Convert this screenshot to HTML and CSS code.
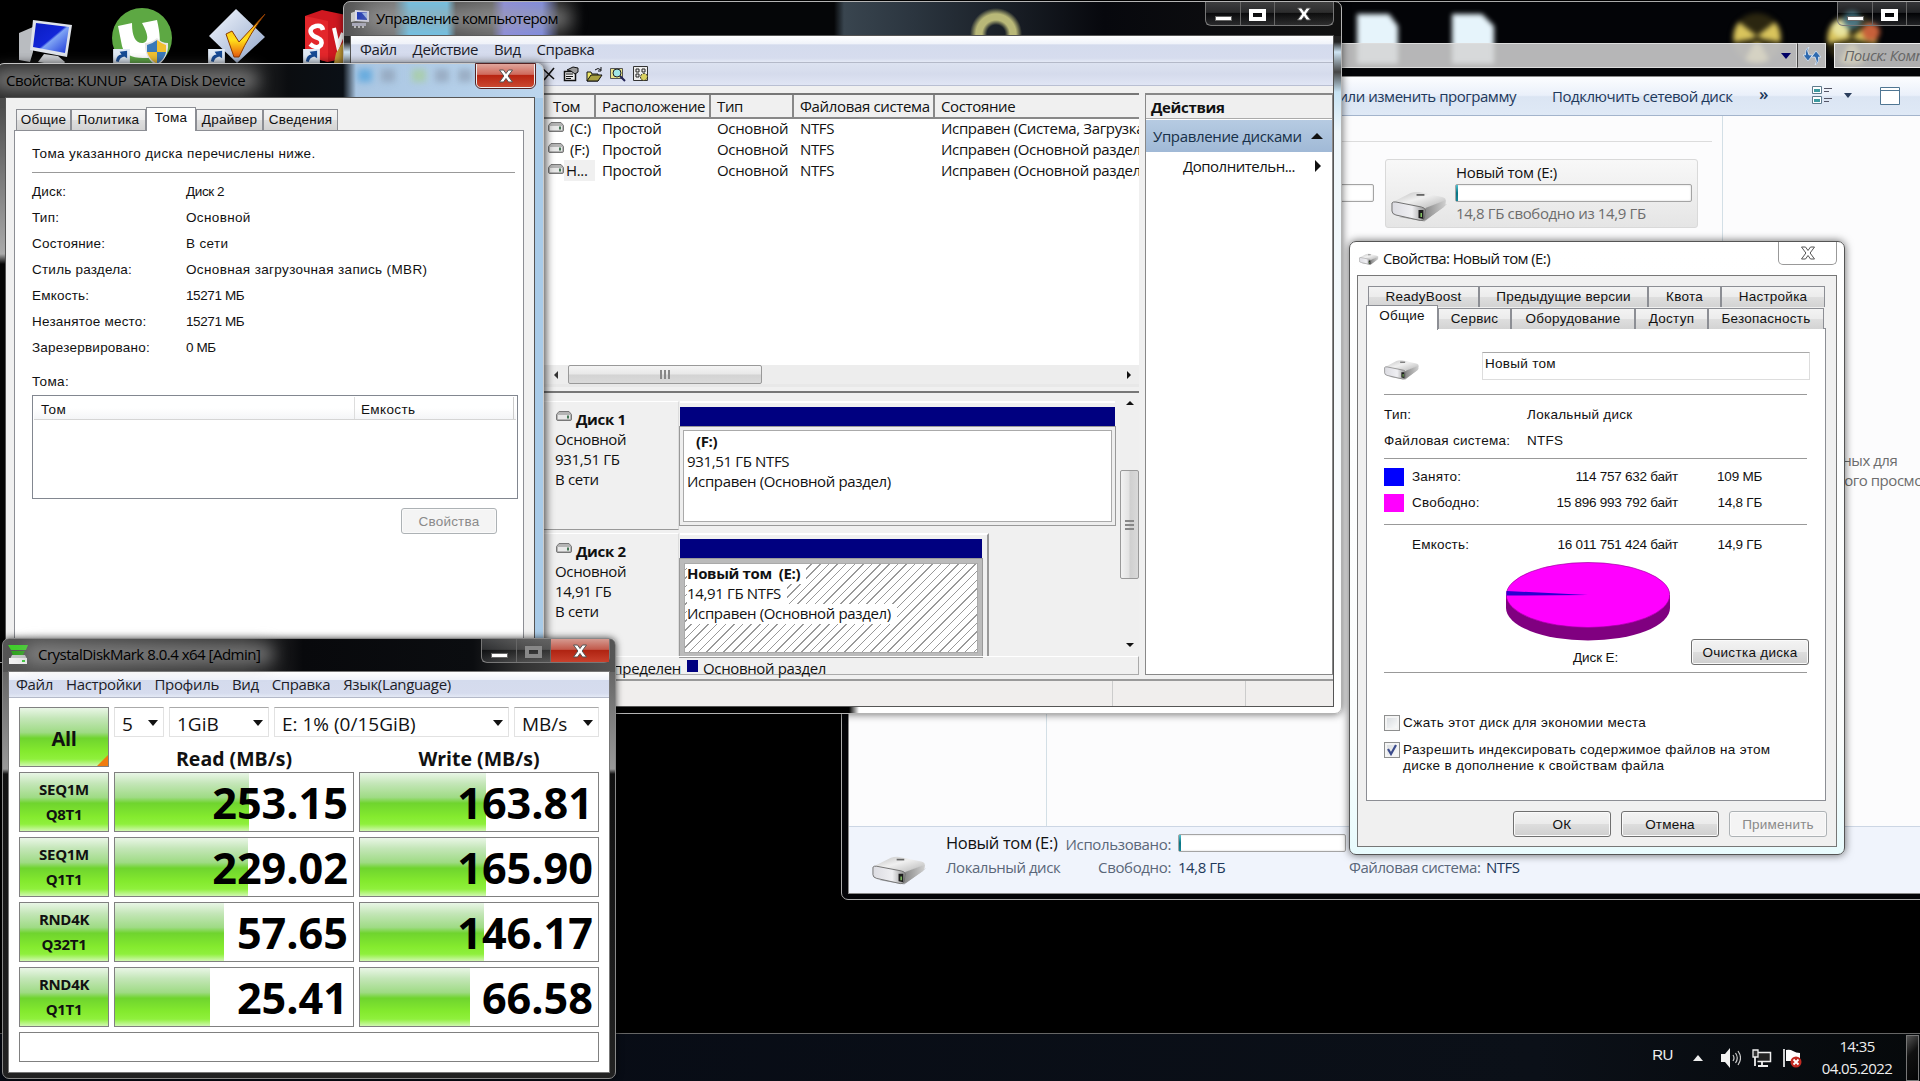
FILE: index.html
```html
<!DOCTYPE html>
<html lang="ru">
<head>
  <meta charset="UTF-8">
  <title>Рабочий стол</title>
  <link rel="stylesheet" href="styles.css">
</head>
<body>
  <svg class="defs" width="0" height="0">
    <defs>
      <linearGradient id="gTop" x1="0" y1="0" x2="1" y2="1"><stop offset="0" stop-color="#bdbdbd"/><stop offset=".45" stop-color="#f0f0f0"/><stop offset="1" stop-color="#b5b5b5"/></linearGradient>
      <linearGradient id="gSide" x1="0" y1="0" x2="1" y2="0"><stop offset="0" stop-color="#dcdce2"/><stop offset=".6" stop-color="#efeff2"/><stop offset="1" stop-color="#8f8f8f"/></linearGradient>
      <linearGradient id="gEdge" x1="0" y1="0" x2="1" y2="0"><stop offset="0" stop-color="#7e7e7e"/><stop offset="1" stop-color="#d0d0d0"/></linearGradient>
      <linearGradient id="gScreen" x1="0" y1="0" x2="1" y2="1"><stop offset="0" stop-color="#0a1cc0"/><stop offset=".5" stop-color="#1226d8"/><stop offset=".55" stop-color="#7fa4f4"/><stop offset="1" stop-color="#1a35d8"/></linearGradient>
      <linearGradient id="gDiamond" x1="0" y1="0" x2="1" y2="1"><stop offset="0" stop-color="#f4f8ff"/><stop offset="1" stop-color="#8fa4c8"/></linearGradient>
      <linearGradient id="gCheck" x1="0" y1="0" x2="0" y2="1"><stop offset="0" stop-color="#ff9a1a"/><stop offset=".6" stop-color="#ffe11a"/><stop offset="1" stop-color="#e8590c"/></linearGradient>
    </defs>
    <symbol id="drive" viewBox="0 0 58 32" preserveAspectRatio="none">
      <path d="M8 27 L34 31.500 L57 14 L50 17z" fill="#000" opacity=".25"/>
      <path d="M2 12 L20 3 Q24 1.500 29 2 L52 7 Q57 8.500 55 11 L36 18 L4 14z" fill="url(#gTop)"/>
      <path d="M56 10 L35 18 L31 30.500 Q34 31 36 29.500 L54 17 Q56 14 56 10z" fill="url(#gEdge)"/>
      <path d="M1 13 Q2 11.500 5 12 L31 17 Q35 18 35 20 L34 28 Q33 31 30 30.500 L5 25 Q1 24 1 21z" fill="url(#gSide)" stroke="#707070" stroke-width="1"/>
      <path d="M28 20h5v9l-5-1z" fill="#1c1c1c"/><path d="M30 23h1.500v4h-1.500z" fill="#8c6"/>
      <path d="M26 4h8v1.800h-8z" fill="#666"/>
    </symbol>
    <symbol id="hdd" viewBox="0 0 16 10">
      <path d="M3 .5h10l2.500 3v4.500q0 1.500-1.500 1.500h-12q-1.500 0-1.500-1.500v-4.500z" fill="#b4b4b4" stroke="#777"/>
      <path d="M2 4h12v4h-12z" fill="#e8e8e8"/><path d="M11 4.500h2v3h-2z" fill="#475"/>
    </symbol>
    <symbol id="shortcut" viewBox="0 0 18 15">
      <path d="M0 0h18v15h-18z" fill="#dfe9f4"/>
      <path d="M3 13 Q4 6 9 6 L7 3 L15 2 L15 10 L12 8 Q7 9 6 14z" fill="#164a94"/>
    </symbol>
    <symbol id="cross" viewBox="0 0 16 14">
      <path d="M1.500 1h4l2.500 3.500 2.500-3.500h4l-4.400 6 4.400 6h-4l-2.500-3.500-2.500 3.500h-4l4.400-6z" fill="#fff" stroke="#555" stroke-width="1"/>
    </symbol>
    <symbol id="nuke" viewBox="0 0 52 52">
      <circle cx="26" cy="26" r="25" fill="#2b2610"/>
      <path d="M26 24 L8 10 A25 25 0 0 0 3 30 L20 27z M26 24 L44 10 A25 25 0 0 1 49 30 L32 27z M23 31 L14 48 A25 25 0 0 0 38 48 L29 31z" fill="#d9c45c"/>
    </symbol>
  </svg>

  <div class="desktop">
    <svg class="shortcuts" width="350" height="70" viewBox="0 0 350 70">
      <path d="M19 33 L33 27 L33 52 L30 62 L19 60z" fill="#b9bcc0"/>
      <path d="M33 20 L72 25 L67 57 L30 50z" fill="#dfe3ea"/>
      <path d="M36 23 L69 27 L65 53 L33 47z" fill="url(#gScreen)"/>
      <path d="M44 54 L58 56 L65 62 L62 66 L38 62z" fill="#cfd2d6"/>
      <circle cx="142" cy="38" r="30" fill="#5da843"/>
      <path d="M118 26 L132 23 Q132 44 143 43 Q152 41 142 23 L157 20 Q162 42 158 48 L165 58 L143 58 Q125 58 122 46z" fill="#fff"/>
      <path d="M157 38 Q151 43 145 43 Q144 58 157 66 Q169 58 168 43 Q161 43 157 38z" fill="#e6e6e6"/>
      <path d="M157 40 Q152 44 147 45 V52 H157z M157 52 H166 Q165 59 157 64z" fill="#3a78b8"/>
      <path d="M157 40 Q162 44 166 45 V52 H157z M157 52 H147 Q149 59 157 64z" fill="#f0c030"/>
      <path d="M236 9 L265 37 L237 63 L209 36z" fill="url(#gDiamond)"/>
      <path d="M226 34 L232 31 L239 42 L265 14 Q250 33 239 57 L234 57z" fill="url(#gCheck)" stroke="#8a3a00"/>
      <path d="M305 16 L322 10 L346 15 L346 58 L328 62 L305 56z" fill="#cf1820"/>
      <path d="M305 16 L328 21 L328 62 L305 56z" fill="#e3262b"/>
      <path d="M323 30 Q322 25 316 26 Q309 28 311 33 Q313 37 318 38 Q323 40 321 45 Q317 50 310 44" fill="none" stroke="#fff" stroke-width="4.500"/>
      <path d="M334 28 L338 46 L343 33" fill="none" stroke="#fff" stroke-width="4"/>
      <path d="M346 38 L336 53 L334 63 L346 63z" fill="#c9a13a"/>
      <use href="#shortcut" x="113" y="49" width="17" height="14"/>
      <use href="#shortcut" x="208" y="49" width="17" height="14"/>
      <use href="#shortcut" x="303" y="49" width="17" height="14"/>
    </svg>

    <!-- explorer -->
    <section class="win explorer">
      <svg class="behind-glass" width="580" height="75" viewBox="0 0 580 75">
        <path d="M17 12 H49 L58 24 V62 H17z M112 12 H142 L154 24 V62 H112z" fill="#e6f4fb"/>
        <use href="#nuke" x="391" y="10" width="52" height="52"/>
        <use href="#nuke" x="485" y="10" width="54" height="54"/>
        <circle cx="501" cy="26" r="9" fill="#e8e4a0"/>
        <circle cx="531" cy="30" r="9" fill="#c8603a"/>
        <circle cx="512" cy="18" r="9" fill="#3a6a78"/>
      </svg>
      <div class="ex-caption">
        <div class="sysbtns">
          <span class="sb min"></span><span class="sb max"></span><span class="sb x"></span>
        </div>
      </div>
      <div class="ex-address">
        <div class="address"><i class="tri down navy"></i></div>
        <div class="refresh">
          <svg width="18" height="18" viewBox="0 0 18 18"><path d="M6 0 Q3 3 6 8 H9.500 L5 14 L0 8 H2.500 Q2 2 6 0z M12 18 Q15 15 12 10 H8.500 L13 4 L18 10 H15.500 Q16 16 12 18z" fill="#2e69ae" stroke="#e4f0ff" stroke-width=".7"/></svg>
        </div>
        <div class="search">Поиск: Компьютер</div>
      </div>
      <div class="ex-client">
        <div class="ex-tools">
          <span class="t-prog">Удалить или изменить программу</span>
          <span class="t-net">Подключить сетевой диск</span>
          <span class="t-more">»</span>
          <svg class="t-view" width="21" height="19" viewBox="0 0 21 19"><path d="M.5.500h9v7h-9z M.5 10.500h9v7h-9z" fill="#fff" stroke="#5e7a8c"/><path d="M2 3h6v3h-6z M2 13h6v3h-6z" fill="#3d9aa0"/><path d="M12 2.500h8M12 5.500h5M12 12.500h8M12 15.500h5" stroke="#556"/></svg>
          <i class="tri down slate"></i>
          <svg class="t-pane" width="20" height="18" viewBox="0 0 20 18"><path d="M.5.500h19v17h-19z" fill="#fff" stroke="#4f7693"/><path d="M1 3.500h18" stroke="#4f7693"/></svg>
        </div>
        <div class="ex-body">
          <div class="ex-nav"></div>
          <div class="ex-files">
            <div class="ex-group"></div>
            <div class="ex-tiles">
              <div class="meter cut"></div>
              <div class="tile">
                <svg width="57" height="32"><use href="#drive"/></svg>
                <div class="tile-info">
                  <div class="tile-name">Новый том (E:)</div>
                  <div class="meter"><i></i></div>
                  <div class="tile-sub">14,8 ГБ свободно из 14,9 ГБ</div>
                </div>
              </div>
            </div>
          </div>
          <div class="ex-preview">Нет данных для<br>предварительного просмотра.</div>
        </div>
        <div class="ex-details">
          <svg width="55" height="30"><use href="#drive"/></svg>
          <div class="d-col d-name"><b>Новый том (E:)</b><span>Локальный диск</span></div>
          <div class="d-col d-keys"><span>Использовано:</span><span>Свободно:</span></div>
          <div class="d-col d-vals"><div class="meter"><i></i></div><em>14,8 ГБ</em></div>
          <div class="d-col d-fs"><span>Файловая система: <em>NTFS</em></span></div>
        </div>
      </div>
    </section>

    <!-- computer management -->
    <section class="win mmc">
      <header class="mmc-title">
        <svg width="20" height="20" viewBox="0 0 20 20"><path d="M1 4l5-2v10l-5 1z" fill="#ccc"/><path d="M5 1l14 1v11l-14-1z" fill="#dde"/><path d="M7 3l10 .5v7.500l-10-.5z" fill="#1733b8"/><path d="M12 4l5 6v-6z" fill="#9bb8f4"/><path d="M2 14h14v3h-14z" fill="#aab"/><path d="M4 18h2M8 18h2M12 18h2" stroke="#bbb" stroke-width="2"/></svg>
        <span class="glow">Управление компьютером</span>
        <div class="sysbtns">
          <span class="sb min"></span><span class="sb max"></span><span class="sb x"><svg width="16" height="14"><use href="#cross"/></svg></span>
        </div>
      </header>
      <div class="mmc-client">
        <nav class="menu"><span>Файл</span><span>Действие</span><span>Вид</span><span>Справка</span></nav>
        <div class="mmc-tools">
          <svg width="14" height="14" viewBox="0 0 14 14"><path d="M1 2l11 10M12 1l-10 12" stroke="#111" stroke-width="1.600"/></svg>
          <svg width="16" height="16" viewBox="0 0 16 16"><path d="M1.500 5.500h11v9h-11z" fill="#eee" stroke="#111" stroke-width="1.500"/><path d="M3 8h7M3 10.500h7M3 12.500h5" stroke="#111"/><path d="M4 4l6-3 5 1v4l-3 2-4-3z" fill="#999" stroke="#111"/></svg>
          <svg width="17" height="15" viewBox="0 0 17 15"><path d="M1 14v-9h4l1 2h6v7z" fill="#eee86a" stroke="#111"/><path d="M1 14l4-6h11l-4 6z" fill="#a8a040" stroke="#111"/><path d="M9 3q3-3 6 0M15 0v4h-3" fill="none" stroke="#111"/></svg>
          <svg width="16" height="16" viewBox="0 0 16 16"><path d="M.5 2.500h12v10h-12z" fill="#e6e28a" stroke="#555"/><circle cx="7" cy="7" r="4" fill="#9fe6e6" stroke="#222"/><path d="M10 10l5 5" stroke="#225" stroke-width="2"/></svg>
          <svg width="16" height="16" viewBox="0 0 16 16"><path d="M.5.500h14v14h-14z" fill="#eee" stroke="#333"/><path d="M3 3h3v3h-3zM3 8h3v3h-3zM9 3h3v3h-3z" fill="none" stroke="#222"/><circle cx="11" cy="11" r="3.500" fill="#d8d060" stroke="#222" stroke-dasharray="2 1"/></svg>
        </div>
        <div class="mmc-body">
          <div class="tree"></div>
          <div class="disks">
            <div class="vols">
              <div class="vrow vhead"><span>Том</span><span>Расположение</span><span>Тип</span><span>Файловая система</span><span>Состояние</span></div>
              <div class="vrow"><span><svg width="16" height="10"><use href="#hdd"/></svg><u>(C:)</u></span><span>Простой</span><span>Основной</span><span>NTFS</span><span>Исправен (Система, Загрузка)</span></div>
              <div class="vrow"><span><svg width="16" height="10"><use href="#hdd"/></svg><u>(F:)</u></span><span>Простой</span><span>Основной</span><span>NTFS</span><span>Исправен (Основной раздел)</span></div>
              <div class="vrow sel"><span><svg width="16" height="10"><use href="#hdd"/></svg><u>Н...</u></span><span>Простой</span><span>Основной</span><span>NTFS</span><span>Исправен (Основной раздел)</span></div>
            </div>
            <div class="hscroll"><i class="tri left"></i><div class="hthumb"><i></i><i></i><i></i></div><i class="tri right"></i></div>
            <div class="splitter"></div>
            <div class="graph">
              <div class="graph-list">
                <div class="disk">
                  <div class="disk-info"><p><svg width="16" height="10"><use href="#hdd"/></svg><b>Диск 1</b></p><p>Основной</p><p>931,51 ГБ</p><p>В сети</p></div>
                  <div class="part full"><div class="cap"></div><div class="vol"><p><b class="ind">(F:)</b></p><p>931,51 ГБ NTFS</p><p>Исправен (Основной раздел)</p></div></div>
                </div>
                <div class="disk second">
                  <div class="disk-info"><p><svg width="16" height="10"><use href="#hdd"/></svg><b>Диск 2</b></p><p>Основной</p><p>14,91 ГБ</p><p>В сети</p></div>
                  <div class="part small"><div class="cap"></div><div class="vol hatch"><p><b>Новый том &nbsp;(E:)</b></p><p><span>14,91 ГБ NTFS</span></p><p><span>Исправен (Основной раздел)</span></p></div></div>
                </div>
              </div>
              <div class="vscroll"><i class="tri up"></i><div class="vthumb"><i></i><i></i><i></i></div><i class="tri down"></i></div>
            </div>
            <div class="legend"><span class="lg-un">Не распределен</span><i></i><span>Основной раздел</span></div>
          </div>
          <aside class="actions">
            <div class="act-head">Действия</div>
            <div class="act-bar"><span>Управление дисками</span><i class="tri up"></i></div>
            <div class="act-row"><span>Дополнительн...</span><i class="tri right"></i></div>
          </aside>
        </div>
        <footer class="mmc-status"><span></span><span></span></footer>
      </div>
    </section>

    <!-- disk device properties -->
    <section class="win device">
      <div class="dev-blur"><i class="b1"></i><i class="b2"></i><i class="b3"></i><i class="b4"></i><i class="b5"></i></div>
      <header class="dev-title">
        <span class="glow">Свойства: KUNUP &nbsp;SATA Disk Device</span>
        <span class="close-red"><svg width="16" height="14"><use href="#cross"/></svg></span>
      </header>
      <div class="dev-client">
        <div class="tabs dev-tabs">
          <span class="w1">Общие</span><span class="w2">Политика</span><span class="w3 on">Тома</span><span class="w4">Драйвер</span><span class="w5">Сведения</span>
        </div>
        <div class="dev-page">
          <p class="dev-intro">Тома указанного диска перечислены ниже.</p>
          <dl>
            <dt>Диск:</dt><dd class="n">Диск 2</dd>
            <dt>Тип:</dt><dd>Основной</dd>
            <dt>Состояние:</dt><dd>В сети</dd>
            <dt>Стиль раздела:</dt><dd>Основная загрузочная запись (MBR)</dd>
            <dt>Емкость:</dt><dd class="n">15271 МБ</dd>
            <dt>Незанятое место:</dt><dd class="n">15271 МБ</dd>
            <dt>Зарезервировано:</dt><dd class="n">0 МБ</dd>
          </dl>
          <p class="dev-label">Тома:</p>
          <div class="dev-list"><div class="dev-cols"><span>Том</span><span>Емкость</span></div></div>
          <button class="btn off dev-btn">Свойства</button>
        </div>
      </div>
    </section>

    <!-- volume properties -->
    <section class="win volume">
      <header class="vol-title">
        <svg width="20" height="12"><use href="#drive"/></svg>
        <span>Свойства: Новый том (E:)</span>
        <span class="close-plain"><svg width="16" height="14"><use href="#cross"/></svg></span>
      </header>
      <div class="vol-client">
        <div class="tabs tabs-back">
          <span class="r1">ReadyBoost</span><span class="r2">Предыдущие версии</span><span class="r3">Квота</span><span class="r4">Настройка</span>
        </div>
        <div class="tabs tabs-front">
          <span class="s1 on">Общие</span><span class="s2">Сервис</span><span class="s3">Оборудование</span><span class="s4">Доступ</span><span class="s5">Безопасность</span>
        </div>
        <div class="vol-page">
          <div class="vol-name"><svg width="36" height="21"><use href="#drive"/></svg><div class="field">Новый том</div></div>
          <div class="facts"><span>Тип:</span><span>Локальный диск</span><span>Файловая система:</span><span>NTFS</span></div>
          <div class="usage">
            <i class="blue"></i><span>Занято:</span><span class="num">114 757 632 байт</span><span class="num">109 МБ</span>
            <i class="pink"></i><span>Свободно:</span><span class="num">15 896 993 792 байт</span><span class="num">14,8 ГБ</span>
          </div>
          <div class="usage total"><i></i><span>Емкость:</span><span class="num">16 011 751 424 байт</span><span class="num">14,9 ГБ</span></div>
          <div class="pie-row">
            <svg width="164" height="80" viewBox="0 0 164 80">
              <path d="M0 33 V46 A82 32.500 0 0 0 164 46 V33z" fill="#800080"/>
              <ellipse cx="82" cy="33" rx="81.700" ry="32.500" fill="#f0f" stroke="#a000a0" stroke-width=".7"/>
              <path d="M82 33 L.5 29 V33.500z" fill="#2a00d0"/>
            </svg>
            <span class="pie-name">Диск E:</span>
            <button class="btn clean">Очистка диска</button>
          </div>
          <div class="checks">
            <label><i class="box"></i><span>Сжать этот диск для экономии места</span></label>
            <label><i class="box"><svg width="12" height="12" viewBox="0 0 12 12"><path d="M2 5l3 5 5-9" fill="none" stroke="#3c4c8c" stroke-width="2.200"/></svg></i><span>Разрешить индексировать содержимое файлов на этом<br>диске в дополнение к свойствам файла</span></label>
          </div>
        </div>
        <div class="vol-buttons"><button class="btn">ОК</button><button class="btn">Отмена</button><button class="btn off">Применить</button></div>
      </div>
    </section>

    <footer class="taskbar">
      <span class="lang">RU</span>
      <i class="tri up white"></i>
      <svg class="tr-sound" width="20" height="20" viewBox="0 0 20 20"><path d="M0 6h4l5-6v20l-5-6h-4z" fill="#f2f2f2"/><path d="M12 7q2 3 0 6M14.500 5q3.500 5 0 10M17 3q5 7 0 14" fill="none" stroke="#ccc" stroke-width="1.200"/></svg>
      <svg class="tr-net" width="20" height="20" viewBox="0 0 20 20"><path d="M6 4.500h12.500v9h-13" fill="#222" stroke="#eee" stroke-width="1.500"/><path d="M1 2h5v7h-5z" fill="#333" stroke="#eee" stroke-width="1.300"/><path d="M3 9v9M10 14v3M6 18h10" stroke="#eee" stroke-width="1.800"/></svg>
      <svg class="tr-flag" width="19" height="20" viewBox="0 0 19 20"><path d="M1 1v18" stroke="#fff" stroke-width="1.600"/><path d="M3 2q4-1 7 1t7 2v8h-14z" fill="#fff"/><circle cx="13" cy="14" r="5.500" fill="#c22a22"/><path d="M10.500 11.500l5 5M15.500 11.500l-5 5" stroke="#fff" stroke-width="1.800"/></svg>
      <div class="clock"><span>14:35</span><span>04.05.2022</span></div>
      <div class="peek"></div>
    </footer>

    <!-- benchmark -->
    <section class="win cdm">
      <header class="cdm-title">
        <svg width="20" height="20" viewBox="0 0 20 20"><path d="M0 0h20l-2 5h-15z" fill="#3fd02a"/><path d="M3 6h14l-2 4h-10z" fill="#2da51c"/><path d="M4 10h13l2 4h-17z" fill="#c4c8c6"/><path d="M1 13h18v6h-18z" fill="#f2f2f2"/><path d="M14 15h3v2h-3z" fill="#3c3"/></svg>
        <span class="glow">CrystalDiskMark 8.0.4 x64 [Admin]</span>
        <div class="sysbtns">
          <span class="sb min"></span><span class="sb max dim"></span><span class="sb x red"><svg width="16" height="14"><use href="#cross"/></svg></span>
        </div>
      </header>
      <div class="cdm-client">
        <nav class="menu cdm-menu"><span>Файл</span><span>Настройки</span><span>Профиль</span><span>Вид</span><span>Справка</span><span>Язык(Language)</span></nav>
        <div class="cdm-grid">
          <div class="cdm-btn all">All</div>
          <div class="cdm-top">
            <div class="selects">
              <div class="sel5">5<i class="tri down"></i></div>
              <div class="selsize">1GiB<i class="tri down"></i></div>
              <div class="seldrive">E: 1% (0/15GiB)<i class="tri down"></i></div>
              <div class="selunit">MB/s<i class="tri down"></i></div>
            </div>
            <div class="heads"><b>Read (MB/s)</b><b>Write (MB/s)</b></div>
          </div>
          <div class="cdm-btn">SEQ1M<br>Q8T1</div>
          <div class="score"><i style="width:56.5%"></i><b>253.15</b></div>
          <div class="score"><i style="width:53.1%"></i><b>163.81</b></div>
          <div class="cdm-btn">SEQ1M<br>Q1T1</div>
          <div class="score"><i style="width:55.7%"></i><b>229.02</b></div>
          <div class="score"><i style="width:53.1%"></i><b>165.90</b></div>
          <div class="cdm-btn">RND4K<br>Q32T1</div>
          <div class="score"><i style="width:45.6%"></i><b>57.65</b></div>
          <div class="score"><i style="width:52.2%"></i><b>146.17</b></div>
          <div class="cdm-btn">RND4K<br>Q1T1</div>
          <div class="score"><i style="width:39.8%"></i><b>25.41</b></div>
          <div class="score"><i style="width:46.4%"></i><b>66.58</b></div>
          <div class="cdm-note"></div>
        </div>
      </div>
    </section>
  </div>
</body>
</html>
```
FILE: styles.css
```css
*, *::before, *::after { box-sizing:border-box; margin:0; padding:0; }
:root {
  --face:#f0f0f0; --line:#8c8e94;
  --segoe:"Open Sans","Noto Sans",sans-serif;
  --shell:"Liberation Sans",Arial,sans-serif;
}
body { width:1920px; height:1081px; overflow:hidden; background:#000; font:15px var(--segoe); letter-spacing:-.35px; color:#111; }
.defs { position:absolute; }
.desktop { position:relative; width:1920px; height:1081px; background:#000; overflow:hidden; }
.shortcuts { position:absolute; left:0; top:0; }
svg { flex:none; display:block; }
i, em { font-style:normal; }
u { text-decoration:none; }
span, p, b, dt, dd { white-space:nowrap; }

.tri { display:block; flex:none; width:0; height:0; border:5px solid transparent; }
.tri.down { border-top:6px solid #111; border-bottom:0; }
.tri.up { border-bottom:6px solid #111; border-top:0; }
.tri.left { border-right:6px solid #333; border-left:0; }
.tri.right { border-left:6px solid #111; border-right:0; }
.tri.navy { border-top-color:#006; border-width:6px 5px 0; }
.tri.slate { border-top-color:#2a3d5c; border-width:5px 4px 0; }
.tri.white { border-bottom-color:#eee; }

/* window chrome */
.win { position:absolute; }
.glow { position:relative; z-index:0; letter-spacing:-.65px; }
.glow::before { content:""; position:absolute; z-index:-1; inset:0 -14px; background:rgba(160,160,160,.62); filter:blur(8px); border-radius:12px; }
.sysbtns { display:flex; height:24px; border:1px solid #777; border-top:0; border-radius:0 0 6px 6px; }
.sb { position:relative; width:34px; display:flex; align-items:center; justify-content:center; border-left:1px solid #666; background:linear-gradient(rgba(255,255,255,.2),rgba(255,255,255,.12) 45%,rgba(0,0,0,.15) 50%,rgba(255,255,255,.12)); }
.sb:first-child { border-left:0; }
.sb.x { width:59px; }
.sb.min::before { content:""; width:17px; height:5px; margin-top:9px; background:#fff; border:1px solid #666; }
.sb.max::before { content:""; width:17px; height:12px; margin-top:2px; border:4px solid #fff; }
.sb.dim::before { border-color:#888; }
.sb.red { background:linear-gradient(#d59a90,#c25a4c 45%,#b02412 50%,#c8402c); }
.close-red { position:relative; display:flex; align-items:center; justify-content:center; width:59px; height:24px; background:linear-gradient(#e0a69c,#cf6a5c 45%,#b82512 50%,#c9472f); border:1px solid #eee; outline:1px solid #522; border-top:0; border-radius:0 0 5px 5px; }

.menu { display:flex; height:27px; align-items:center; background:linear-gradient(#fff,#f0f3fa 30%,#d4dbed 34%,#d6dcee 85%,#e4e9f5); border-bottom:1px solid #b4b9c8; color:#1c1c28; }

.tabs { display:flex; font:13.500px/19px var(--shell); letter-spacing:.25px; }
.tabs span { flex:none; height:21px; text-align:center; background:linear-gradient(#f3f3f3,#ececec 48%,#dedede 52%,#d3d3d3); border:1px solid var(--line); border-bottom:0; }
.tabs .on { background:#fff; position:relative; }
.btn { font:13.500px var(--shell); letter-spacing:.2px; height:26px; border:1px solid #707070; border-radius:3px; background:linear-gradient(#f3f3f3,#ebebeb 48%,#dddddd 52%,#cfcfcf); box-shadow:inset 0 0 0 1px #fafafa; color:#111; }
.btn.off { color:#8a8a8a; background:#f4f4f4; border-color:#adb2b5; }

/* explorer */
.explorer { left:841px; top:1px; width:1090px; height:899px; border:1px solid #aaa; border-radius:7px; background:#030407; padding:0 6px; letter-spacing:-.46px; }
.behind-glass { position:absolute; left:498px; top:0; filter:blur(2.500px); }
.ex-caption { height:41px; display:flex; justify-content:flex-end; position:relative; }
.ex-caption .sysbtns { margin-right:-43px; width:130px; }
.ex-address { display:flex; height:25px; position:relative; }
.address { width:949px; display:flex; align-items:center; justify-content:flex-end; padding-right:5px; background:rgba(212,212,212,.86); border:1px solid #ddd; }
.refresh { width:29px; display:flex; align-items:center; justify-content:center; background:rgba(212,212,212,.86); border:1px solid #ddd; border-left-color:#444; }
.search { flex:1; margin-left:8px; padding-left:9px; line-height:22px; font-style:italic; color:#666; background:rgba(205,205,205,.85); border:1px solid #eee; white-space:nowrap; overflow:hidden; }
.ex-client { margin-top:8px; height:818px; border:1px solid #888; background:#fcfcfd; display:flex; flex-direction:column; position:relative; }
.ex-tools { height:39px; padding-bottom:1px; display:flex; align-items:center; background:linear-gradient(#fcfdff,#eaf0fa 48%,#dbe5f3 52%,#dfe9f6); border-bottom:1px solid #a3b4cc; color:#1e395b; }
.ex-tools > * { flex:none; }
.t-prog { width:667px; text-align:right; }
.t-net { margin-left:36px; width:180px; }
.t-more { margin-left:27px; width:15px; font-size:17px; line-height:20px; margin-top:-3px; font-weight:600; }
.t-view { margin-left:38px; }
.ex-tools .slate { margin-left:11px; }
.t-pane { margin-left:28px; }
.ex-body { flex:1; display:flex; }
.ex-nav { flex:none; width:198px; border-right:1px solid #d3dfe6; }
.ex-files { flex:none; width:676px; border-right:1px solid #d3dfe6; }
.ex-group { height:26px; border-bottom:1px solid #dcdcdc; margin-right:10px; }
.ex-tiles { display:flex; margin-top:17px; }
.meter { height:18px; background:#fff; border:1px solid #a4a4a4; border-radius:2px; box-shadow:inset 0 0 2px #ccc; }
.meter i { display:block; width:2px; height:16px; background:linear-gradient(#4fc3d2,#0a7483 50%,#16889a); }
.meter.cut { flex:none; width:190px; margin:25px 0 0 137px; }
.tile { flex:none; margin-left:11px; width:313px; height:69px; display:flex; background:linear-gradient(#f8f8f8,#e5e5e5); border:1px solid #d9d9d9; border-radius:3px; letter-spacing:-.35px; }
.tile svg { margin:30px 0 0 5px; }
.tile-info { margin-left:7px; width:237px; }
.tile-name { line-height:24px; height:24px; padding-left:1px; }
.tile-sub { line-height:22px; color:#6d6d6d; white-space:nowrap; padding-left:1px; }
.ex-preview { flex:none; width:240px; text-align:center; padding-top:334px; line-height:20px; color:#6d6d6d; white-space:nowrap; }
.ex-details { height:67px; display:flex; background:#f0f4fc; border-top:1px solid #ccd6e4; color:#5a6779; }
.ex-details svg { margin:28px 0 0 23px; }
.d-col { display:flex; flex-direction:column; line-height:24px; padding-top:5px; }
.d-col b { font-weight:400; font-size:16.500px; letter-spacing:-.35px; height:23px; line-height:22px; color:#111; }
.d-col em { color:#1e395b; }
.d-name { margin-left:19px; width:115px; }
.d-keys { width:110px; text-align:right; line-height:23px; padding-top:6px; letter-spacing:-.35px; }
.d-vals { width:168px; margin-left:7px; line-height:23px; padding-top:6px; }
.d-vals .meter { margin:1px 0 4px; }
.d-fs { margin-left:3px; padding-top:29px; line-height:23px; }
.d-fs em { margin-left:2px; }

/* computer management */
.mmc { left:343px; top:1px; width:999px; height:713px; border:1px solid #b4b4b4; border-radius:7px; box-shadow:0 0 8px rgba(0,0,0,.6); overflow:hidden; padding:0 7px 0 6px;
  background:
    radial-gradient(circle at 155px 32px,transparent 9px,#b9b878 14px,#b9b878 20px,transparent 26px) 497px 0/310px 34px no-repeat,
    linear-gradient(90deg,#555 0,#777 50px,#6fc4e8 65px,#6fc4e8 103px,#555 112px,#666 148px,#8c8ce0 160px,#7d8ae4 198px,#222 215px,#050608 240px,#050608 490px,#39454f 500px,#2b353f 570px,#07080d 760px,#111 990px) 0 0/100% 34px no-repeat,
    linear-gradient(90deg,#000 505px,#fff 515px) 0 100%/100% 9px no-repeat,
    linear-gradient(#222 40px,#cfe5f4 50px,#444 70px,#c7e3f4 90px,#eef6fa 130px,#fff); }
.mmc-title { height:33px; display:flex; align-items:center; color:#000; }
.mmc-title .glow { margin:0 0 1px 6px; }
.mmc-title .sysbtns { margin:0 0 9px auto; }
.mmc-client { height:672px; border:1px solid #555; background:var(--face); display:flex; flex-direction:column; }
.mmc .menu { padding:0 0 1px 9px; gap:16px; letter-spacing:-.45px; }
.mmc-tools { height:23px; display:flex; align-items:center; gap:7px; padding-left:191px; background:linear-gradient(#dce2f0,#d5dbec 50%,#e0e5f4); border-bottom:1px solid #b9bfd2; }
.mmc-body { flex:none; height:589px; padding-top:7px; display:flex; }
.tree { width:192px; }
.disks { width:596px; display:flex; flex-direction:column; }
.disks > * { flex:none; }
.vols { height:272px; background:#fff; border-top:2px solid #777; overflow:hidden; }
.vrow { display:grid; grid-template-columns:53px 115px 83px 141px 204px; height:21px; line-height:21px; }
.vrow span { padding-left:6px; overflow:hidden; }
.vrow span:first-child { display:flex; padding-left:5px; }
.vrow svg { margin:4px 6px 0 0; }
.vhead { height:24px; background:#f0f0f0; border-bottom:2px solid #888; }
.vhead span { border-right:2px solid #888; height:22px; line-height:22px; }
.vhead span:first-child { padding-left:10px; }
.vhead span:last-child { border:0; }
.vrow:not(.vhead) { margin-top:-1px; margin-bottom:1px; }
.sel u { background:#f0f0f0; padding-left:2px; width:31px; margin-left:-6px; }
.hscroll { height:19px; display:flex; align-items:center; background:#ededed; padding:0 8px 0 11px; }
.hthumb { width:194px; height:19px; margin:0 auto 0 10px; display:flex; gap:2px; align-items:center; justify-content:center; border:1px solid #999; background:linear-gradient(#f4f4f4,#e8e8e8 48%,#d3d3d3 52%,#dadada); border-radius:2px; }
.hthumb i { width:2px; height:9px; background:#888; }
.hscroll .tri, .vscroll .tri { border-width:4px; }
.hscroll .left { border-left-width:0; }
.hscroll .right { border-right-width:0; }
.vscroll .down { border-bottom-width:0; }
.vscroll .up { border-top-width:0; }
.splitter { height:9px; border-bottom:2px solid #777; border-top:3px solid #e8e8e8; }
.graph { height:263px; display:flex; background:#f0f0f0; }
.graph-list { width:575px; }
.disk { display:flex; height:137px; padding-top:8px; line-height:20px; }
.disk.second { height:126px; padding-top:3px; }
.disk-info { width:136px; padding:7px 0 0 12px; border-top:1px solid #fff; border-bottom:1px solid #999; border-right:1px solid #ddd; }
.second .disk-info { border-bottom:0; }
.disk-info p { display:flex; }
.disk-info svg { margin:2px 4px 0 1px; }
.part { margin-left:1px; padding-top:4px; height:124px; border-top:2px solid #fff; }
.part.full { width:435px; }
.part.small { width:309px; padding-right:5px; border-right:2px solid #999; height:123px; }
.cap { height:19px; background:#000080; }
.vol { height:98px; padding:1px 0 0 4px; margin-top:1px; background:#fff; border:3px solid #eee; outline:1px solid #999; box-shadow:inset 0 0 0 1px #aaa; }
.ind { padding-left:9px; }
.hatch { padding:0 0 0 3px; border:4px solid #bbb; background:repeating-linear-gradient(135deg,#fff 0,#fff 5.100px,#999 5.100px,#999 6.100px) padding-box; }
.hatch p { height:20px; }
.hatch b, .hatch span { display:inline-block; height:20px; line-height:18px; background:#fff; padding-right:6px; }
.vscroll { width:19px; margin-left:2px; display:flex; flex-direction:column; align-items:center; background:#efefef; padding:8px 0 9px; }
.vthumb { width:19px; height:109px; margin:65px 0 auto; display:flex; flex-direction:column; gap:2px; align-items:center; justify-content:center; background:linear-gradient(90deg,#f2f2f2,#e2e2e2 48%,#cfcfcf 52%,#d9d9d9); border:1px solid #999; border-radius:2px; }
.vthumb i { width:9px; height:2px; background:#888; }
.legend { height:19px; display:flex; line-height:22px; border:1px solid #aaa; border-top-color:#fff; }
.legend .lg-un { width:137px; text-align:right; }
.legend i { width:11px; height:12px; margin:3px 5px 0 6px; background:#000080; }
.actions { width:188px; margin-left:6px; background:#fff; border:1px solid #888; border-top-width:2px; }
.act-head { height:24px; line-height:25px; padding-left:5px; font-weight:700; background:#efefef; border-bottom:1px solid #aaa; }
.act-bar { height:32px; display:flex; align-items:center; justify-content:space-between; padding:0 9px 0 7px; background:linear-gradient(#b6cbe2,#a0b9d6); color:#173048; margin-top:1px; }
.act-row { height:28px; display:flex; align-items:center; justify-content:space-between; padding:0 11px 0 37px; letter-spacing:-.5px; }
.act-bar .tri { border-left-width:6px; border-right-width:6px; }
.act-row .tri { border-top-width:6px; border-bottom-width:6px; }
.mmc-status { flex:1; margin-top:4px; background:#f0eeed; border-top:2px solid #999; display:flex; justify-content:flex-end; }
.mmc-status span { width:133px; border-left:1px solid #ccc; }
.mmc-status span:last-child { width:88px; }

/* disk device properties */
.device { left:-3px; top:63px; width:547px; height:600px; border:1px solid #ccc; border-radius:7px 8px 0 0; padding:0 8px 0 7px; box-shadow:2px 0 8px rgba(0,0,0,.7);
  background:
    linear-gradient(90deg,#2b2b2b 0,#2b2b2b 240px,#0b0d10 290px,#0b1016 345px,#aac6e2 358px,#bcd6ee) 0 0/100% 34px no-repeat,
    linear-gradient(90deg,transparent 20px,#a9cbe8 20px) 0 0,
    linear-gradient(#333,#aaa 190px,#050505 200px); }
/* toolbar of the window below, seen through the glass */
.dev-blur { position:absolute; left:360px; top:5px; display:flex; gap:9px; filter:blur(3px); }
.dev-blur i { width:14px; height:13px; background:#8b99ad; opacity:.6; }
.dev-blur .b1 { background:#3d9bdc; }
.dev-blur .b2 { margin-right:8px; }
.dev-blur .b3 { background:#a5cf8c; }
.dev-title { height:33px; display:flex; align-items:flex-start; }
.dev-title .glow { margin-top:6px; margin-left:1px; line-height:20px; color:#000; letter-spacing:-.45px; }
.close-red { margin-left:auto; }
.dev-client { position:relative; height:570px; background:var(--face); border:1px solid #555; padding:9px 10px 0 8px; font:13.500px var(--shell); letter-spacing:.36px; }
.dev-tabs { height:23px; padding:2px 0 0 2px; }
.w1 { width:55px; } .w2 { width:75px; } .w3 { width:50px; } .w4 { width:67px; } .w5 { width:75px; }
.dev-tabs .on { margin-top:-2px; height:24px; }
.dev-page { height:540px; background:#fff; border:1px solid var(--line); padding:13px 5px 0 17px; }
.dev-intro { height:29px; line-height:20px; border-bottom:1px solid #999; }
.dev-page dl { display:grid; grid-template-columns:154px 1fr; line-height:26px; padding-top:6px; }
.dev-page dt { letter-spacing:.22px; }
.dev-page .n { letter-spacing:-.4px; }
.dev-label { line-height:20px; margin-top:11px; }
.dev-page dl, .dev-intro { margin-right:3px; }
.dev-list { height:104px; margin:3px 0 9px; border:1px solid #828790; padding:1px; }
.dev-cols { display:flex; height:23px; line-height:25px; background:linear-gradient(#fff 50%,#f4f5f7); border-bottom:1px solid #d5d5d5; }
.dev-cols span { flex:none; width:320px; padding-left:7px; }
.dev-cols span + span { border-left:1px solid #ddd; width:160px; border-right:1px solid #ccc; padding-left:6px; }
.dev-btn { display:block; width:96px; margin-left:369px; }

/* volume properties */
.volume { left:1349px; top:241px; width:496px; height:614px; border:1px solid #555; border-radius:7px; background:linear-gradient(#fff,#fbfdfd 80%,#e8fbfd); padding:0 7px 0 7px; box-shadow:0 0 9px rgba(0,0,0,.6); }
.vol-title { height:33px; display:flex; align-items:center; padding-left:2px; color:#111; letter-spacing:-.6px; }
.vol-title > span:nth-child(2) { margin:0 0 1px 4px; }
.close-plain { margin:0 0 auto auto; width:59px; height:23px; display:flex; justify-content:center; align-items:center; border:1px solid #999; border-top:0; border-radius:0 0 5px 5px; }
.vol-client { height:572px; border:1px solid #777; background:var(--face); padding:10px 10px 0 8px; font:13.500px var(--shell); letter-spacing:.2px; }
.tabs-back { padding-left:2px; height:22px; }
.r1 { width:111px; } .r2 { width:169px; } .r3 { width:73px; } .r4 { width:104px; }
.tabs-front { height:20px; }
.s1 { width:72px; } .s2 { width:73px; } .s3 { width:124px; } .s4 { width:73px; } .s5 { width:116px; }
.tabs-front .on { margin-top:-3px; height:25px; z-index:1; }
.vol-page { height:473px; background:#fff; border:1px solid var(--line); padding:0 18px 0 17px; }
.vol-name { height:66px; border-bottom:1px solid #999; display:flex; }
.vol-name svg { margin-top:30px; }
.field { flex:none; margin:23px 0 0 62px; width:328px; height:28px; padding:2px; border:1px solid #ddd; border-top-color:#aaa; line-height:17px; letter-spacing:.3px; }
.facts { display:grid; grid-template-columns:143px 1fr; grid-auto-rows:26px; height:64px; line-height:26px; padding-top:7px; border-bottom:1px solid #999; letter-spacing:.28px; }
.usage { display:grid; grid-template-columns:28px 80px 186px 84px; height:66px; grid-auto-rows:26px; line-height:26px; padding-top:5px; border-bottom:1px solid #999; }
.usage.total { border:0; height:37px; padding-top:7px; }
.usage i { width:20px; height:18px; margin-top:4px; }
.blue { background:#00f; } .pink { background:#f0f; }
.usage .num { text-align:right; letter-spacing:-.25px; }
.pie-row { position:relative; height:111px; padding-left:122px; border-bottom:1px solid #999; }
.pie-name { display:block; padding-left:67px; margin-top:6px; line-height:20px; letter-spacing:-.1px; }
.clean { position:absolute; right:-2px; bottom:7px; width:118px; letter-spacing:.3px; }
.checks { padding-top:41px; line-height:16px; letter-spacing:.32px; }
.checks label { display:flex; gap:3px; margin-bottom:10px; padding-top:1px; }
.box { width:16px; height:16px; border:1px solid #8e8f8f; background:linear-gradient(135deg,#d4d8dc,#fff); box-shadow:inset 0 0 0 2px #f4f4f4; padding:1px; flex:none; }
.vol-buttons { display:flex; justify-content:flex-end; gap:10px; margin:10px -1px 0 0; }
.vol-buttons .btn { width:98px; }

/* taskbar */
.taskbar { position:absolute; left:0; top:1033px; width:1920px; height:48px; display:flex; align-items:center; justify-content:flex-end; background:linear-gradient(90deg,#060a14,#0b1018 80%,#06090b); border-top:1px solid #666; color:#eee; }
.lang { font:15px var(--shell); letter-spacing:-.4px; margin:-7px 20px 0 0; }
.tr-sound { margin-left:18px; }
.tr-net { margin-left:11px; }
.tr-flag { margin-left:11px; }
.clock { display:flex; flex-direction:column; align-items:center; width:98px; margin-left:6px; line-height:22.500px; letter-spacing:-.6px; margin-top:-1px; }
.peek { width:13px; height:46px; border:1px solid #777; background:linear-gradient(135deg,#555,#111 40%,#050505); margin-right:1px; }

/* benchmark */
.cdm { left:2px; top:638px; width:614px; height:441px; border:1px solid #888; border-radius:7px; padding:0 5px; box-shadow:0 0 7px rgba(0,0,0,.7);
  background:linear-gradient(90deg,#555 0,#333 240px,#08090c 300px,#0b0d10 470px,#333 520px,#555) 0 0/100% 33px no-repeat,
    linear-gradient(#555,#999 130px,#111 135px,#222); }
.cdm-title { height:32px; display:flex; align-items:center; color:#000; }
.cdm-title .glow { margin:0 0 2px 10px; letter-spacing:-.5px; }
.cdm-title .sysbtns { margin:0 0 auto auto; }
.cdm-client { height:402px; border:1px solid #777; background:#fff; }
.cdm-menu { height:26px; padding:0 0 1px 7px; gap:13px; }
.cdm-grid { display:grid; grid-template-columns:90px 240px 240px; grid-template-rows:60px 60px 60px 60px 60px 30px; gap:5px; padding:9px 10px 0; letter-spacing:0; }
.cdm-btn, .score { border:1px solid #808080; }
.cdm-btn, .score i { background:linear-gradient(#e9f6e6 0,#c4e6b8 18%,#9fdb85 42%,#6fd42e 52%,#84ea2e 75%,#8ff03c 88%,#d0f8b0 100%); }
.cdm-btn { position:relative; padding-top:4px; text-align:center; font-weight:700; line-height:25px; letter-spacing:-.3px; }
.cdm-btn.all { font-size:20px; padding-top:18px; }
.all::after { content:""; position:absolute; right:0; bottom:0; width:0; height:0; border:solid transparent; border-width:0 0 11px 11px; border-bottom-color:#f07c10; }
.cdm-top { grid-column:span 2; }
.selects { display:flex; gap:5px; }
.selects div { height:30px; line-height:32px; font-size:19px; letter-spacing:0; padding:0 5px 0 7px; display:flex; justify-content:space-between; border:1px solid #e2e2e2; border-top-color:#aaa; white-space:nowrap; }
.selects .tri { margin-top:12px; }
.sel5 { width:50px; } .selsize { width:100px; } .seldrive { width:235px; } .selunit { width:85px; }
.heads { display:grid; grid-template-columns:240px 240px; gap:5px; text-align:center; font-size:19.500px; line-height:43px; height:30px; }
.score { position:relative; text-align:right; }
.score i { display:block; height:100%; }
.score b { position:absolute; right:5px; top:0; font-size:43.200px; line-height:60px; color:#000; }
.cdm-note { grid-column:span 3; border:1px solid #808080; }
```
